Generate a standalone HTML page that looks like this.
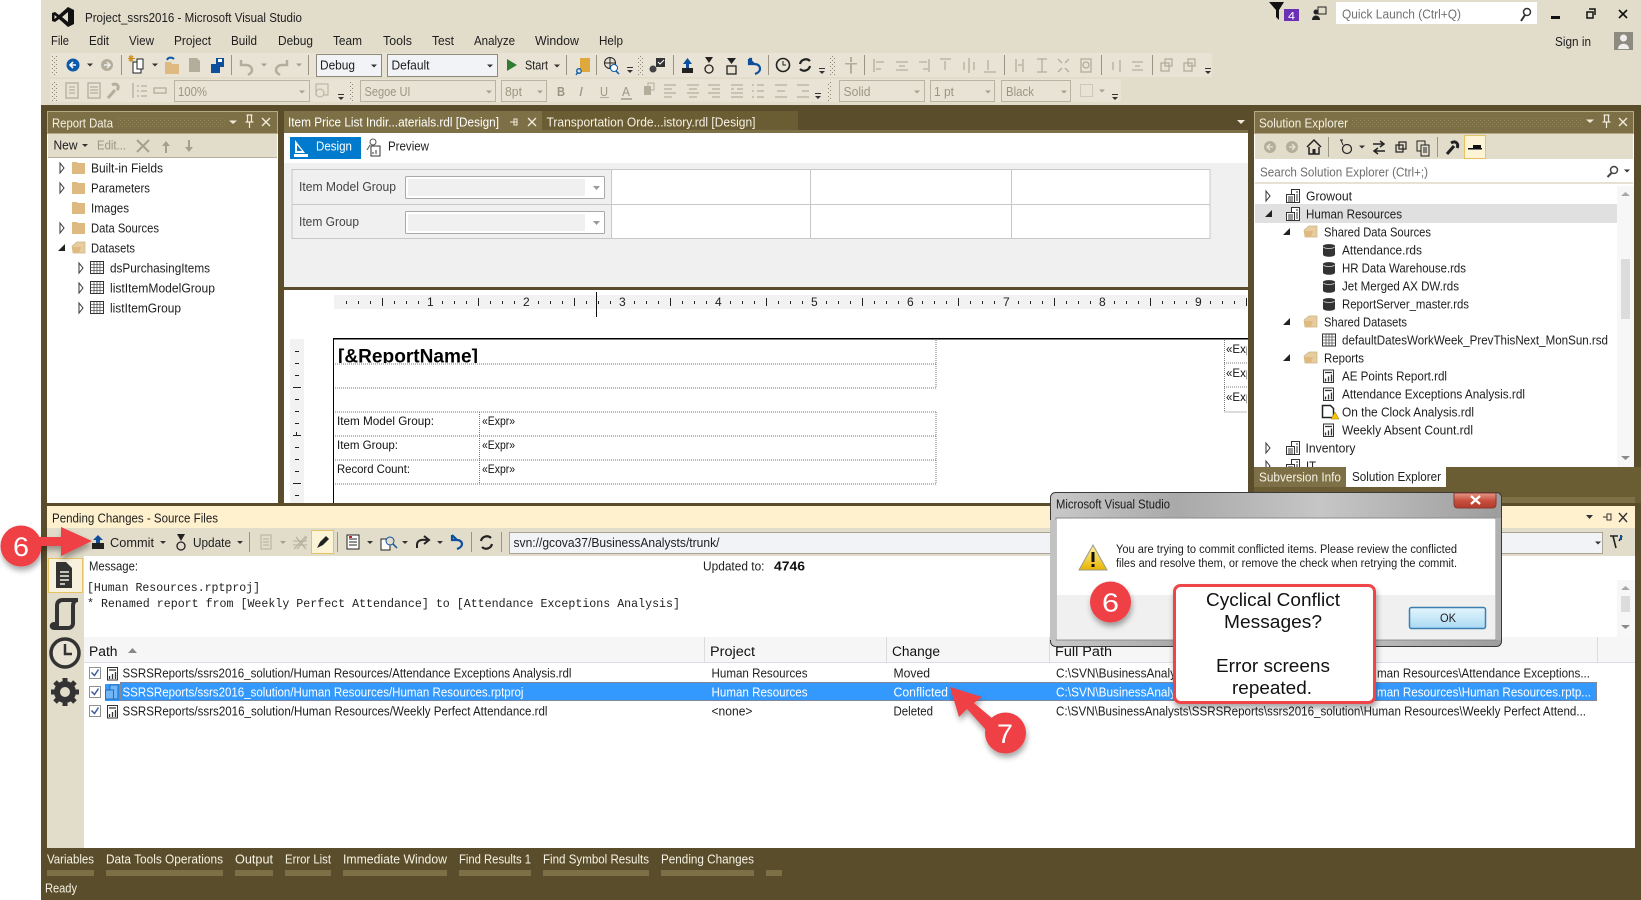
<!DOCTYPE html>
<html><head><meta charset="utf-8"><title>Project_ssrs2016 - Microsoft Visual Studio</title>
<style>
html,body{margin:0;padding:0;background:#fff;overflow:hidden}
svg{display:block}
text{font-family:"Liberation Sans",sans-serif;font-size:12.5px;fill:#1e1e1e}
.w{fill:#f6f2e4}.g{fill:#9b9684}.b{fill:#fff}.m{font-family:"Liberation Mono",monospace;font-size:12px}
.d{stroke:#777;stroke-width:1;stroke-dasharray:1 1;fill:none}
.ic{fill:#b3ae9c}.sep{fill:#9a9482}
</style></head><body>
<svg xmlns="http://www.w3.org/2000/svg" width="1641" height="900" viewBox="0 0 1641 900">
<defs>
<linearGradient id="aero" x1="0" x2="1" y1="0" y2="0"><stop offset="0" stop-color="#c9c9c9"/><stop offset=".28" stop-color="#a9a9a9"/><stop offset=".6" stop-color="#c6c6c6"/><stop offset="1" stop-color="#9d9d9d"/></linearGradient>
<linearGradient id="ok" x1="0" x2="0" y1="0" y2="1"><stop offset="0" stop-color="#e3f4fc"/><stop offset=".5" stop-color="#c8e8f8"/><stop offset="1" stop-color="#a9d9f3"/></linearGradient>
<linearGradient id="red" x1="0" x2="0" y1="0" y2="1"><stop offset="0" stop-color="#e69a8a"/><stop offset=".5" stop-color="#c9503d"/><stop offset="1" stop-color="#b23a2c"/></linearGradient>
<linearGradient id="warn" x1="0" x2="0" y1="0" y2="1"><stop offset="0" stop-color="#fff2a0"/><stop offset="1" stop-color="#e8b400"/></linearGradient>
<filter id="sh" x="-40%" y="-40%" width="190%" height="190%"><feDropShadow dx="1" dy="4" stdDeviation="3" flood-color="#000" flood-opacity=".35"/></filter>
<pattern id="dots" width="4" height="4" patternUnits="userSpaceOnUse"><rect width="1" height="1" fill="#8f8258"/><rect x="2" y="2" width="1" height="1" fill="#8f8258"/></pattern>
<pattern id="grip" width="4" height="4" patternUnits="userSpaceOnUse"><rect width="1" height="1" fill="#8d8875"/><rect x="2" y="2" width="1" height="1" fill="#8d8875"/></pattern>
<pattern id="hr" x="334" y="295" width="96" height="14" patternUnits="userSpaceOnUse"><g fill="#222"><rect x="12" y="6" width="1" height="3"/><rect x="24" y="6" width="1" height="3"/><rect x="36" y="6" width="1" height="3"/><rect x="48" y="3" width="1" height="8"/><rect x="60" y="6" width="1" height="3"/><rect x="72" y="6" width="1" height="3"/><rect x="84" y="6" width="1" height="3"/></g></pattern>
<g id="folder"><path d="M0 1h5l1 1h7v11H0z" fill="#deba80"/></g>
<g id="ofolder"><path d="M0 5l5-4h8v11H1z" fill="#e6cd9f" stroke="#cdb27e" stroke-width=".7"/><path d="M0 6h9l-2 6H1z" fill="#deba80"/></g>
<path id="ex" d="M-2-5L2 0L-2 5Z" fill="#fff" stroke="#333"/>
<path id="exd" d="M-4 3H3V-4Z" fill="#222"/>
<g id="tbl"><rect x=".5" y=".5" width="13" height="12" fill="#fff" stroke="#333"/><path d="M1 3.5h12M1 6.500h12M1 9.500h12M4 1v11M7 1v11M10 1v11" stroke="#555" stroke-width=".8"/></g>
<g id="proj"><rect x="5.500" y=".5" width="8" height="13" fill="#fff" stroke="#333"/><rect x=".5" y="5.500" width="8" height="8" fill="#fff" stroke="#333"/><path d="M2 8h5M2 10h5M2 12h5M10 3h2M11 5v7" stroke="#333"/></g>
<g id="db"><path d="M0 2.500C0 0 12 0 12 2.500V11C12 14 0 14 0 11Z" fill="#333"/><path d="M.5 3.500C2 5.500 10 5.500 11.500 3.500" fill="none" stroke="#ddd" stroke-width=".8"/></g>
<g id="rep"><rect x=".5" y=".5" width="10" height="12.500" fill="#fff" stroke="#333"/><path d="M2 3h7M2.500 12V9M5.500 12V7M8.500 12V5" stroke="#333" stroke-width="1.300"/></g>
<path id="dd" d="M-3-1.500H3L0 1.500Z" fill="#333"/>
<path id="ddg" d="M-3-1.500H3L0 1.500Z" fill="#a5a08e"/>
<g id="ovf"><rect x="-3" y="-3" width="6" height="1" fill="#333"/><path d="M-3 0H3L0 3Z" fill="#333"/></g>
<g id="ptb"><path d="M-4-1.500H4L0 2Z" fill="#f0ebdb"/></g>
<g id="pin"><path d="M-3-6h6M-2-6v7h4v-7M-4 1h8M0 1v6" fill="none" stroke="#f0ebdb" stroke-width="1.200"/></g>
<g id="xx"><path d="M-4-4L4 4M4-4L-4 4" stroke="#f0ebdb" stroke-width="1.400"/></g>
</defs>

<!-- base -->
<rect x="41" width="1600" height="900" fill="#5a4d2b"/>
<rect x="41" width="1600" height="105" fill="#e2dccb"/>

<!-- title -->
<path fill-rule="evenodd" d="M68 7L74 10V24L68 27L59 19L55 22L52 21V13L55 12L59 15ZM68 12L62 17L68 22ZM54.500 15V19L57 17Z" fill="#111"/>
<text x="85" y="22" textLength="217" lengthAdjust="spacingAndGlyphs">Project_ssrs2016 - Microsoft Visual Studio</text>
<path d="M1269 2H1284L1279 10V20L1276 17V10Z" fill="#111"/>
<rect x="1284" y="9" width="15" height="12" fill="#6b2fb5"/><text class="b" x="1288" y="19.500" style="font-size:11px" textLength="7" lengthAdjust="spacingAndGlyphs">4</text>
<rect x="1318" y="7" width="8" height="7" fill="none" stroke="#222"/><circle cx="1316" cy="12" r="2.500" fill="#222"/><path d="M1312 20c0-6 8-6 8 0z" fill="#222"/>
<rect x="1336" y="2" width="201" height="22" fill="#fff"/>
<text x="1342" y="18.500" textLength="119" lengthAdjust="spacingAndGlyphs" style="fill:#717171">Quick Launch (Ctrl+Q)</text>
<circle cx="1527" cy="12" r="3.500" fill="none" stroke="#333" stroke-width="1.500"/><path d="M1525 15L1521 21" stroke="#333" stroke-width="2"/>
<rect x="1551" y="16" width="9" height="3" fill="#111"/>
<path d="M1587 12h6v6h-6zM1589 9h6v6" fill="none" stroke="#111" stroke-width="1.500"/>
<path d="M1619 10l8 8M1627 10l-8 8" stroke="#111" stroke-width="1.600"/>
<text x="1555" y="46" textLength="36" lengthAdjust="spacingAndGlyphs">Sign in</text>
<rect x="1614" y="32" width="19" height="18" fill="#8d8a80"/><circle cx="1623.500" cy="38" r="3.500" fill="#eee"/><path d="M1618 49c0-7 11-7 11 0z" fill="#eee"/>

<!-- menu -->
<g>
<text x="51" y="45" textLength="18" lengthAdjust="spacingAndGlyphs">File</text>
<text x="89" y="45" textLength="20" lengthAdjust="spacingAndGlyphs">Edit</text>
<text x="129" y="45" textLength="25" lengthAdjust="spacingAndGlyphs">View</text>
<text x="174" y="45" textLength="37" lengthAdjust="spacingAndGlyphs">Project</text>
<text x="231" y="45" textLength="26" lengthAdjust="spacingAndGlyphs">Build</text>
<text x="278" y="45" textLength="35" lengthAdjust="spacingAndGlyphs">Debug</text>
<text x="333" y="45" textLength="29" lengthAdjust="spacingAndGlyphs">Team</text>
<text x="383" y="45" textLength="29" lengthAdjust="spacingAndGlyphs">Tools</text>
<text x="432" y="45" textLength="22" lengthAdjust="spacingAndGlyphs">Test</text>
<text x="474" y="45" textLength="41" lengthAdjust="spacingAndGlyphs">Analyze</text>
<text x="535" y="45" textLength="44" lengthAdjust="spacingAndGlyphs">Window</text>
<text x="599" y="45" textLength="24" lengthAdjust="spacingAndGlyphs">Help</text>
</g>

<!-- toolbars -->
<rect x="50" y="53" width="1162" height="24" fill="#e8e3d4"/>
<rect x="50" y="79" width="1071" height="23" fill="#e8e3d4"/>
<rect x="52" y="55" width="5" height="20" fill="url(#grip)"/><rect x="52" y="81" width="5" height="20" fill="url(#grip)"/>
<circle cx="73" cy="65" r="6.500" fill="#0d5aa7"/><path d="M76 65h-5M73 62l-3 3l3 3" stroke="#fff" stroke-width="1.600" fill="none"/>
<use href="#dd" x="90" y="65"/>
<circle cx="107" cy="65" r="6" fill="#b3ae9c"/><path d="M104 65h5M107 62l3 3l-3 3" stroke="#eee" stroke-width="1.500" fill="none"/>
<rect x="121" y="55" width="1" height="20" class="sep"/>
<rect x="133" y="62" width="8" height="11" fill="#fff" stroke="#222"/><rect x="137" y="59" width="6" height="10" fill="#fff" stroke="#222"/><path d="M131 55v7M128 58.500h7M129 56l4 5M133 56l-4 5" stroke="#c98a1a" stroke-width="1.100"/>
<use href="#dd" x="155" y="65"/>
<path d="M165 62h6l1 2h7v10h-14z" fill="#deba80"/><path d="M167 60c1-3 5-3 7-1" stroke="#0d5aa7" stroke-width="2" fill="none"/>
<path d="M189 58h8l3 3v11h-11z" class="ic"/>
<path d="M211 64h9v9h-9z" fill="#0d4f9c"/><path d="M216 58h8v9h-8z" fill="#0d4f9c"/><rect x="218" y="59" width="4" height="3" fill="#fff"/>
<rect x="231" y="55" width="1" height="20" class="sep"/>
<path d="M241 60v5h5c3 0 6 2 6 5 0 2-1 3-4 5" fill="none" stroke="#b3ae9c" stroke-width="2.400"/>
<use href="#ddg" x="264" y="65"/>
<path d="M287 60v5h-5c-3 0-6 2-6 5 0 2 1 3 4 5" fill="none" stroke="#b3ae9c" stroke-width="2.400"/>
<use href="#ddg" x="299" y="65"/>
<rect x="308" y="55" width="1" height="20" class="sep"/>
<rect x="316.500" y="54.500" width="65" height="22" fill="#f2f3f6" stroke="#8f8a78"/>
<text x="320" y="69.500" textLength="35" lengthAdjust="spacingAndGlyphs">Debug</text><use href="#dd" x="374" y="66"/>
<rect x="387.500" y="54.500" width="110" height="22" fill="#f2f3f6" stroke="#8f8a78"/>
<text x="391.500" y="69.500" textLength="38" lengthAdjust="spacingAndGlyphs">Default</text><use href="#dd" x="490" y="66"/>
<path d="M507 59L517 65L507 71Z" fill="#2f7d32"/>
<text x="525" y="69.500" textLength="23" lengthAdjust="spacingAndGlyphs">Start</text><use href="#dd" x="557" y="66"/>
<rect x="566" y="55" width="1" height="20" class="sep"/>
<path d="M580 58h10v14h-8v-3h-2z" fill="#dfa83c"/><circle cx="579" cy="71" r="2.300" fill="none" stroke="#0d5aa7" stroke-width="1.300"/><path d="M576 75l2-3" stroke="#0d5aa7" stroke-width="1.300"/>
<rect x="596" y="55" width="1" height="20" class="sep"/>
<circle cx="610" cy="63" r="5.500" fill="none" stroke="#222"/><path d="M604.500 63h11M610 57.500v11" stroke="#222"/><circle cx="614" cy="68" r="3.500" fill="#fff" stroke="#0d5aa7"/><path d="M616 71l3 3" stroke="#0d5aa7" stroke-width="1.500"/>
<use href="#ovf" x="630" y="70"/>
<rect x="638" y="55" width="5" height="20" fill="url(#grip)"/>
<circle cx="653" cy="69" r="3.500" fill="#444"/><circle cx="659" cy="64" r="2.500" fill="#444"/><rect x="656" y="58" width="9" height="9" fill="#333"/><path d="M658 62l2 2 4-4" stroke="#fff" fill="none"/>
<rect x="673" y="55" width="1" height="20" class="sep"/>
<rect x="682" y="68" width="11" height="5" fill="#222"/><path d="M687.500 58L692 64H683Z" fill="#0d4f9c"/><rect x="686" y="63" width="3" height="5" fill="#0d4f9c"/>
<circle cx="709" cy="69" r="4" fill="none" stroke="#222" stroke-width="1.300"/><path d="M705 57h8l-4 6z" fill="#222"/>
<rect x="727" y="66" width="9" height="8" fill="none" stroke="#222" stroke-width="1.300"/><path d="M731.500 64L736 58H727Z" fill="#222"/>
<path d="M749 59h2v5h3c4 0 6 2 6 5 0 2-2 4-5 5M749 59l5 5M749 59v5h5" fill="none" stroke="#0d4f9c" stroke-width="2.200"/>
<rect x="768" y="55" width="1" height="20" class="sep"/>
<circle cx="783" cy="65" r="6.500" fill="none" stroke="#222" stroke-width="1.600"/><path d="M783 61v4h3" stroke="#222" fill="none"/>
<path d="M800 64a6 6 0 0 1 10-3M810 66a6 6 0 0 1-10 3" fill="none" stroke="#222" stroke-width="2.200"/>
<use href="#ovf" x="822" y="71"/>
<rect x="830" y="55" width="5" height="20" fill="url(#grip)"/>
<g class="ic"><path d="M845 63h12v1.500h-5v9h-2v-9h-5zM850 57h2v5h-2z"/><rect x="864" y="55" width="1" height="20" fill="#9a9482"/>
<g fill="none" stroke="#b3ae9c" stroke-width="1.300"><path d="M874 59v13M876 62h8M876 69h5M896 62h12M899 66h6M896 70h12M929 59v13M919 62h8M923 69h5M940 59h11M945 61v9M964 62v8M969 58v15M974 62v8M984 72h12M988 60v10M1016 59v13M1023 59v13M1018 65h4M1037 59h10M1037 72h10M1042 59v13M1058 59l4 4M1069 59l-4 4M1058 72l4-4M1069 72l-4-4M1113 62v8M1120 60v12M1132 62h11M1135 66h5M1132 70h11"/><rect x="1081" y="59" width="10" height="13"/><circle cx="1086" cy="65" r="3"/><rect x="1161" y="63" width="8" height="8"/><rect x="1165" y="59" width="7" height="7"/><rect x="1184" y="63" width="8" height="8"/><rect x="1188" y="59" width="7" height="7"/></g></g>
<rect x="1004" y="55" width="1" height="20" class="sep"/><rect x="1101" y="55" width="1" height="20" class="sep"/><rect x="1152" y="55" width="1" height="20" class="sep"/>
<use href="#ovf" x="1208" y="71"/>

<!-- row 2 -->
<g fill="none" stroke="#b3ae9c" stroke-width="1.300"><rect x="66" y="83" width="12" height="15"/><path d="M69 87h6M69 90h6M69 93h6"/><rect x="88" y="83" width="12" height="15"/><path d="M90 87h8M90 90h8M90 93h8"/><path d="M108 98l7-8M112 85c5-3 8 2 5 5" stroke-width="3"/><path d="M133 83v15M141 86h6M141 91h6M141 96h6M137 86h2M137 91h2M137 96h2"/><rect x="154" y="88" width="12" height="5"/></g>
<rect x="174.500" y="80.500" width="135" height="21" fill="#e8e3d4" stroke="#b9b4a2"/>
<text class="g" x="178" y="96" textLength="29" lengthAdjust="spacingAndGlyphs">100%</text><use href="#ddg" x="302" y="92"/>
<rect x="316" y="84" width="12" height="11" fill="none" stroke="#b3ae9c"/><circle cx="320" cy="93" r="4" fill="#e8e3d4" stroke="#b3ae9c"/>
<use href="#ovf" x="341" y="97"/>
<rect x="349" y="81" width="5" height="20" fill="url(#grip)"/>
<rect x="360.500" y="80.500" width="135" height="21" fill="#e8e3d4" stroke="#b9b4a2"/>
<text class="g" x="364.500" y="96" textLength="46" lengthAdjust="spacingAndGlyphs">Segoe UI</text><use href="#ddg" x="489" y="92"/>
<rect x="501.500" y="80.500" width="45" height="21" fill="#e8e3d4" stroke="#b9b4a2"/>
<text class="g" x="505" y="96" textLength="17" lengthAdjust="spacingAndGlyphs">8pt</text><use href="#ddg" x="540" y="92"/>
<text class="g" x="557" y="96" style="font-weight:bold" textLength="8" lengthAdjust="spacingAndGlyphs">B</text>
<text class="g" x="579" y="96" style="font-style:italic" textLength="4" lengthAdjust="spacingAndGlyphs">I</text>
<text class="g" x="600" y="96" textLength="8" lengthAdjust="spacingAndGlyphs">U</text><rect x="600" y="97" width="9" height="1" fill="#b3ae9c"/>
<text class="g" x="622" y="96" textLength="8" lengthAdjust="spacingAndGlyphs">A</text><rect x="621" y="98" width="11" height="2" fill="#b3ae9c"/>
<rect x="644" y="86" width="7" height="9" class="ic"/><rect x="648" y="83" width="6" height="7" fill="none" stroke="#b3ae9c"/>
<g fill="none" stroke="#b3ae9c" stroke-width="1.300"><path d="M664 85h12M664 89h8M664 93h12M664 97h8M687 85h12M689 89h8M687 93h12M689 97h8M708 85h12M712 89h8M708 93h12M712 97h8M731 85h12M731 89h3M737 89h6M731 93h12M731 97h12M752 85h2M757 85h7M752 91h2M757 91h7M752 97h2M757 97h7M775 85h12M777 91h8M775 97h12M797 85h12M802 91h7M797 97h12"/></g>
<use href="#ovf" x="818" y="96"/>
<rect x="827" y="81" width="5" height="20" fill="url(#grip)"/>
<rect x="839.500" y="80.500" width="85" height="21" fill="#e8e3d4" stroke="#b9b4a2"/><text class="g" x="843.500" y="96" textLength="27" lengthAdjust="spacingAndGlyphs">Solid</text><use href="#ddg" x="917" y="92"/>
<rect x="930.500" y="80.500" width="64" height="21" fill="#e8e3d4" stroke="#b9b4a2"/><text class="g" x="934" y="96" textLength="20" lengthAdjust="spacingAndGlyphs">1 pt</text><use href="#ddg" x="988" y="92"/>
<rect x="1001.500" y="80.500" width="69" height="21" fill="#e8e3d4" stroke="#b9b4a2"/><text class="g" x="1006" y="96" textLength="28" lengthAdjust="spacingAndGlyphs">Black</text><use href="#ddg" x="1064" y="92"/>
<rect x="1080.500" y="84.500" width="12" height="12" fill="none" stroke="#b3ae9c" stroke-dasharray="1 1"/><use href="#ddg" x="1102" y="91"/>
<use href="#ovf" x="1115" y="97"/>

<!-- Report Data panel -->
<rect x="47" y="111" width="231" height="392" fill="#fff"/>
<rect x="47.500" y="111.500" width="230" height="22" fill="#7e7046" stroke="#b5aa85"/>
<rect x="117" y="118" width="108" height="9" fill="url(#dots)"/>
<text class="w" x="52" y="127.500" textLength="61" lengthAdjust="spacingAndGlyphs">Report Data</text>
<use href="#ptb" x="233" y="122"/><use href="#pin" x="249.500" y="121"/><use href="#xx" x="266" y="122"/>
<rect x="48" y="134" width="229" height="24" fill="#e2dccb"/><rect x="48" y="157" width="229" height="1" fill="#b5af9b"/>
<text x="53.500" y="149.500" textLength="24" lengthAdjust="spacingAndGlyphs">New</text><use href="#dd" x="85" y="145.500"/>
<text class="g" x="97" y="149.500" textLength="29" lengthAdjust="spacingAndGlyphs">Edit...</text>
<path d="M137 140l12 12M149 140l-12 12" stroke="#a5a08e" stroke-width="2"/>
<path d="M166 141l-4 5h3v7h2v-7h3zM189 152l-4-5h3v-7h2v7h3z" fill="#a5a08e"/>
<g>
<use href="#ex" x="62" y="168"/><use href="#folder" x="72" y="161"/><text x="91" y="172.500" textLength="72" lengthAdjust="spacingAndGlyphs">Built-in Fields</text>
<use href="#ex" x="62" y="188"/><use href="#folder" x="72" y="181"/><text x="91" y="192.500" textLength="59" lengthAdjust="spacingAndGlyphs">Parameters</text>
<use href="#folder" x="72" y="201"/><text x="91" y="212.500" textLength="38" lengthAdjust="spacingAndGlyphs">Images</text>
<use href="#ex" x="62" y="228"/><use href="#folder" x="72" y="221"/><text x="91" y="232.500" textLength="68" lengthAdjust="spacingAndGlyphs">Data Sources</text>
<use href="#exd" x="62" y="248"/><use href="#ofolder" x="72" y="241"/><text x="91" y="252.500" textLength="44" lengthAdjust="spacingAndGlyphs">Datasets</text>
<use href="#ex" x="81" y="268"/><use href="#tbl" x="90" y="261"/><text x="110" y="272.500" textLength="100" lengthAdjust="spacingAndGlyphs">dsPurchasingItems</text>
<use href="#ex" x="81" y="288"/><use href="#tbl" x="90" y="281"/><text x="110" y="292.500" textLength="105" lengthAdjust="spacingAndGlyphs">listItemModelGroup</text>
<use href="#ex" x="81" y="308"/><use href="#tbl" x="90" y="301"/><text x="110" y="312.500" textLength="71" lengthAdjust="spacingAndGlyphs">listItemGroup</text>
</g>

<!-- Tabs -->
<rect x="284" y="111" width="258" height="22" fill="#7e7046"/>
<rect x="542" y="111" width="256" height="19" fill="#6a5c33"/>
<rect x="284" y="130" width="964" height="3" fill="#7e7046"/>
<text class="b" x="288" y="126.500" textLength="211" lengthAdjust="spacingAndGlyphs">Item Price List Indir...aterials.rdl [Design]</text>
<path d="M510 122h7M514 119v6h3v-6zM514 122h-4" stroke="#f0ebdb" fill="none"/><use href="#xx" x="532" y="122"/>
<text class="w" x="546.500" y="126.500" textLength="209" lengthAdjust="spacingAndGlyphs">Transportation Orde...istory.rdl [Design]</text>
<path d="M1237 120H1245L1241 124Z" fill="#f0ebdb"/>

<!-- Design area -->
<rect x="284" y="133" width="964" height="370" fill="#fff"/>
<rect x="290" y="137" width="71" height="22" fill="#007acc"/>
<path d="M295 140v13l10 0zM297 145v6h5z" fill="#fff" fill-rule="evenodd"/><rect x="294" y="154" width="14" height="3" fill="#fff"/>
<text class="b" x="316" y="150.500" textLength="36" lengthAdjust="spacingAndGlyphs">Design</text>
<rect x="371" y="146" width="9" height="10" fill="#fff" stroke="#333"/><circle cx="373" cy="142" r="3" fill="none" stroke="#555"/><path d="M367 150l3-5" stroke="#555"/><path d="M373 154v-2M376 154v-4" stroke="#333"/>
<text x="388" y="150.500" textLength="41" lengthAdjust="spacingAndGlyphs">Preview</text>
<rect x="284" y="163" width="964" height="124" fill="#f0f0f0"/>
<rect x="292" y="169.500" width="918" height="69" fill="#fff"/>
<rect x="292" y="169.500" width="319" height="69" fill="#f0f0f0"/>
<path d="M292 169.500H1210V238.500H292ZM292 204.500H1210M611.500 170V238M810.500 170V238M1011.500 170V238" fill="none" stroke="#c8c8c8"/>
<text x="299" y="191" style="fill:#444" textLength="97" lengthAdjust="spacingAndGlyphs">Item Model Group</text>
<text x="299" y="226" style="fill:#444" textLength="60" lengthAdjust="spacingAndGlyphs">Item Group</text>
<rect x="405.500" y="176.500" width="199" height="22" rx="1" fill="#fff" stroke="#aaa"/><rect x="408" y="179" width="177" height="17" fill="#f0f0f0"/><path d="M593 186h7l-3.500 4z" fill="#999"/>
<rect x="405.500" y="211.500" width="199" height="22" rx="1" fill="#fff" stroke="#aaa"/><rect x="408" y="214" width="177" height="17" fill="#f0f0f0"/><path d="M593 221h7l-3.500 4z" fill="#999"/>
<rect x="284" y="287" width="964" height="3" fill="#5a4d2b"/>
<!-- ruler -->
<rect x="334" y="295" width="913" height="14" fill="#f2f2f2"/>
<rect x="334" y="295" width="913" height="14" fill="url(#hr)"/>
<g>
<text x="427" y="306" style="font-size:12px">1</text><text x="523" y="306" style="font-size:12px">2</text><text x="619" y="306" style="font-size:12px">3</text><text x="715" y="306" style="font-size:12px">4</text><text x="811" y="306" style="font-size:12px">5</text><text x="907" y="306" style="font-size:12px">6</text><text x="1003" y="306" style="font-size:12px">7</text><text x="1099" y="306" style="font-size:12px">8</text><text x="1195" y="306" style="font-size:12px">9</text>
</g>
<rect x="596" y="292" width="1" height="25" fill="#111"/>
<!-- v ruler -->
<rect x="290" y="339" width="14" height="164" fill="#f2f2f2"/>
<g fill="#222"><rect x="295" y="351" width="4" height="1"/><rect x="295" y="363" width="4" height="1"/><rect x="295" y="375" width="4" height="1"/><rect x="293" y="387" width="8" height="1"/><rect x="295" y="399" width="4" height="1"/><rect x="295" y="411" width="4" height="1"/><rect x="295" y="423" width="4" height="1"/><rect x="293" y="435" width="8" height="1"/><rect x="296" y="432" width="1" height="3"/><rect x="295" y="447" width="4" height="1"/><rect x="295" y="459" width="4" height="1"/><rect x="295" y="471" width="4" height="1"/><rect x="293" y="483" width="8" height="1"/><rect x="295" y="495" width="4" height="1"/></g>
<!-- report -->
<rect x="333" y="338" width="915" height="1.500" fill="#000"/><rect x="333" y="338" width="1" height="165" fill="#000"/>
<svg x="335" y="340" width="145" height="23"><text x="3" y="22.500" style="font-weight:bold;font-size:19px;fill:#000" textLength="140" lengthAdjust="spacingAndGlyphs">[&amp;ReportName]</text></svg>
<path class="d" d="M335 364H936M335 388H936M936 340V388M335 412H936M335 436H936M335 460H936M335 484H936M936 412V484M479.500 412V484"/>
<g>
<text x="337" y="425" style="font-size:12px;fill:#111" textLength="97" lengthAdjust="spacingAndGlyphs">Item Model Group:</text>
<text x="337" y="449" style="font-size:12px;fill:#111" textLength="61" lengthAdjust="spacingAndGlyphs">Item Group:</text>
<text x="337" y="473" style="font-size:12px;fill:#111" textLength="73" lengthAdjust="spacingAndGlyphs">Record Count:</text>
<text x="482" y="425" style="font-size:11.500px;fill:#111" textLength="33" lengthAdjust="spacingAndGlyphs">«Expr»</text>
<text x="482" y="449" style="font-size:11.500px;fill:#111" textLength="33" lengthAdjust="spacingAndGlyphs">«Expr»</text>
<text x="482" y="473" style="font-size:11.500px;fill:#111" textLength="33" lengthAdjust="spacingAndGlyphs">«Expr»</text>
</g>
<path class="d" d="M1224.500 340V412H1247M1224 363H1247M1224 387H1247"/>
<svg x="1224" y="340" width="23" height="72"><text x="2" y="13" style="font-size:11.500px;fill:#111">«Expr»</text><text x="2" y="37" style="font-size:11.500px;fill:#111">«Expr»</text><text x="2" y="61" style="font-size:11.500px;fill:#111">«Expr»</text></svg>

<!-- Solution Explorer -->
<rect x="1254" y="467" width="387" height="36" fill="#6a5c33"/>
<rect x="1254" y="111" width="380" height="356" fill="#fff"/>
<rect x="1254.500" y="111.500" width="379" height="22" fill="#7e7046" stroke="#b5aa85"/>
<rect x="1352" y="118" width="232" height="9" fill="url(#dots)"/>
<text class="w" x="1259" y="127.500" textLength="89" lengthAdjust="spacingAndGlyphs">Solution Explorer</text>
<use href="#ptb" x="1590" y="121"/><use href="#pin" x="1606.500" y="121"/><use href="#xx" x="1623" y="122"/>
<rect x="1255" y="134" width="378" height="25" fill="#e2dccb"/>
<circle cx="1270" cy="147" r="6" class="ic"/><path d="M1273 147h-5M1270 144l-3 3l3 3" stroke="#e8e3d4" stroke-width="1.300" fill="none"/>
<circle cx="1292" cy="147" r="6" class="ic"/><path d="M1289 147h5M1292 144l3 3l-3 3" stroke="#e8e3d4" stroke-width="1.300" fill="none"/>
<path d="M1307 147l7-7 7 7M1309 147v7h10v-7" fill="none" stroke="#222" stroke-width="1.500"/><rect x="1312.500" y="149" width="3" height="5" fill="#222"/>
<rect x="1328" y="137" width="1" height="20" class="sep"/>
<circle cx="1347" cy="149" r="4.500" fill="none" stroke="#222" stroke-width="1.200"/><path d="M1340 140l3 0M1341 140l2 5" stroke="#222"/>
<use href="#dd" x="1362" y="147"/>
<path d="M1373 144h11M1380 141l4 3-4 3M1385 151h-11M1378 148l-4 3 4 3" fill="none" stroke="#222" stroke-width="1.500"/>
<rect x="1396" y="145" width="7" height="7" fill="none" stroke="#222" stroke-width="1.200"/><rect x="1399" y="142" width="7" height="7" fill="none" stroke="#222" stroke-width="1.200"/>
<rect x="1417" y="141" width="8" height="10" fill="none" stroke="#222"/><rect x="1421" y="145" width="8" height="11" fill="#e2dccb" stroke="#222"/><path d="M1423 148h4M1423 150h4M1423 152h4" stroke="#222"/>
<rect x="1437" y="137" width="1" height="20" class="sep"/>
<path d="M1447 154l7-8M1451 143c5-3 8 1 6 5" stroke="#222" stroke-width="3" fill="none"/>
<rect x="1464.500" y="135.500" width="21" height="23" fill="#fdf4d6" stroke="#e5c365"/><rect x="1468" y="148" width="14" height="1.500" fill="#111"/><rect x="1473" y="145" width="8" height="3" fill="#111"/>
<text x="1260" y="176.500" style="fill:#6e6e6e" textLength="168" lengthAdjust="spacingAndGlyphs">Search Solution Explorer (Ctrl+;)</text>
<circle cx="1614" cy="170" r="3.500" fill="none" stroke="#444" stroke-width="1.500"/><path d="M1611.500 173l-4 4" stroke="#444" stroke-width="2"/><use href="#dd" x="1627" y="171"/>
<rect x="1255" y="182" width="378" height="2" fill="#e6e1d2"/>
<rect x="1255" y="204" width="362" height="19" fill="#e0e0e0"/>
<rect x="1617" y="186" width="17" height="281" fill="#f7f7f7"/>
<path d="M1621 196l4.500-4 4.500 4z" fill="#a8a8a8"/><rect x="1621" y="259" width="9" height="60" fill="#dcdcdc"/><path d="M1621 456l4.500 4 4.500-4z" fill="#8a8a8a"/>
<svg x="1255" y="184" width="362" height="283"><g transform="translate(-1255 -184)">
<use href="#ex" x="1268" y="196"/><use href="#proj" x="1286" y="189"/><text x="1306" y="200.500" textLength="46" lengthAdjust="spacingAndGlyphs">Growout</text>
<use href="#exd" x="1269" y="214"/><use href="#proj" x="1286" y="207"/><text x="1306" y="218.500" textLength="96" lengthAdjust="spacingAndGlyphs">Human Resources</text>
<use href="#exd" x="1287" y="232"/><use href="#ofolder" x="1304" y="225"/><text x="1324" y="236.500" textLength="107" lengthAdjust="spacingAndGlyphs">Shared Data Sources</text>
<use href="#db" x="1323" y="243.500"/><text x="1342" y="254.500" textLength="80" lengthAdjust="spacingAndGlyphs">Attendance.rds</text>
<use href="#db" x="1323" y="261.500"/><text x="1342" y="272.500" textLength="124" lengthAdjust="spacingAndGlyphs">HR Data Warehouse.rds</text>
<use href="#db" x="1323" y="279.500"/><text x="1342" y="290.500" textLength="117" lengthAdjust="spacingAndGlyphs">Jet Merged AX DW.rds</text>
<use href="#db" x="1323" y="297.500"/><text x="1342" y="308.500" textLength="127" lengthAdjust="spacingAndGlyphs">ReportServer_master.rds</text>
<use href="#exd" x="1287" y="322"/><use href="#ofolder" x="1304" y="315"/><text x="1324" y="326.500" textLength="83" lengthAdjust="spacingAndGlyphs">Shared Datasets</text>
<use href="#tbl" x="1322" y="333.500"/><text x="1342" y="344.500" textLength="266" lengthAdjust="spacingAndGlyphs">defaultDatesWorkWeek_PrevThisNext_MonSun.rsd</text>
<use href="#exd" x="1287" y="358"/><use href="#ofolder" x="1304" y="351"/><text x="1324" y="362.500" textLength="40" lengthAdjust="spacingAndGlyphs">Reports</text>
<use href="#rep" x="1323" y="369.500"/><text x="1342" y="380.500" textLength="105" lengthAdjust="spacingAndGlyphs">AE Points Report.rdl</text>
<use href="#rep" x="1323" y="387.500"/><text x="1342" y="398.500" textLength="183" lengthAdjust="spacingAndGlyphs">Attendance Exceptions Analysis.rdl</text>
<path d="M1322.500 405.500h8l3 3v9h-11z" fill="#fff" stroke="#222" stroke-width="1.500"/><path d="M1331 419l4-7 4 7z" fill="#f6c400" stroke="#9a7a00" stroke-width=".5"/><text x="1342" y="416.500" textLength="132" lengthAdjust="spacingAndGlyphs">On the Clock Analysis.rdl</text>
<use href="#rep" x="1323" y="423.500"/><text x="1342" y="434.500" textLength="131" lengthAdjust="spacingAndGlyphs">Weekly Absent Count.rdl</text>
<use href="#ex" x="1268" y="448"/><use href="#proj" x="1286" y="441"/><text x="1305.500" y="452.500" textLength="50" lengthAdjust="spacingAndGlyphs">Inventory</text>
<use href="#ex" x="1268" y="466"/><use href="#proj" x="1286" y="459"/><text x="1306" y="470.500" textLength="10" lengthAdjust="spacingAndGlyphs">IT</text>
</g></svg>
<rect x="1254" y="467" width="92" height="20" fill="#7e7046"/>
<text class="w" x="1259" y="481.500" textLength="82" lengthAdjust="spacingAndGlyphs">Subversion Info</text>
<rect x="1346" y="467" width="100" height="20" fill="#fff"/>
<text x="1352" y="481" textLength="89" lengthAdjust="spacingAndGlyphs">Solution Explorer</text>
<rect x="1254" y="497" width="381" height="6" fill="#7e7046"/>

<!-- Pending Changes -->
<rect x="47" y="506" width="1588" height="342" fill="#fff"/>
<rect x="47" y="506" width="1588" height="22" fill="#fff0ce"/>
<text x="52" y="522.500" textLength="166" lengthAdjust="spacingAndGlyphs">Pending Changes - Source Files</text>
<path d="M1586 515h7l-3.500 4z" fill="#333"/><path d="M1603 517h4M1607 514v6h4v-6z" stroke="#333" fill="none"/><path d="M1619 513l8 9M1627 513l-8 9" stroke="#333" stroke-width="1.400"/>
<rect x="47" y="528" width="1588" height="28" fill="#e2dccb"/>
<rect x="47" y="556" width="37" height="292" fill="#e2dccb"/>
<!-- toolbar -->
<rect x="92" y="543" width="12" height="6" fill="#222"/><path d="M98 535l5 5h-3v3h-4v-3h-3z" fill="#0d4f9c"/>
<text x="110" y="547" textLength="44" lengthAdjust="spacingAndGlyphs">Commit</text><use href="#dd" x="163" y="542.500"/>
<circle cx="181" cy="546" r="4" fill="none" stroke="#222" stroke-width="1.300"/><path d="M177 534h8l-4 7z" fill="#222"/>
<text x="193" y="547" textLength="38" lengthAdjust="spacingAndGlyphs">Update</text><use href="#dd" x="240" y="542.500"/>
<rect x="249" y="532" width="1" height="20" class="sep"/>
<rect x="261" y="535" width="10" height="14" fill="none" stroke="#b3ae9c"/><path d="M263 539h6M263 542h6M263 545h6" stroke="#b3ae9c"/><use href="#ddg" x="283" y="542.500"/>
<path d="M294 549l12-13M297 549l10-12M296 537l10 12M293 541h14M293 545h14" stroke="#b3ae9c" fill="none"/>
<rect x="311.500" y="530.500" width="22" height="23" fill="#fdf4d6" stroke="#e5c365"/><path d="M317 548l3-6 6-6 3 3-6 6z" fill="#222"/>
<rect x="337" y="532" width="1" height="20" class="sep"/>
<rect x="347" y="535" width="12" height="14" fill="#fff" stroke="#222"/><path d="M349 539h8M349 542h8M349 545h8" stroke="#222"/><rect x="349" y="536" width="3" height="2" fill="#c22"/><use href="#dd" x="370" y="542.500"/>
<rect x="381" y="539" width="9" height="11" fill="#fff" stroke="#222"/><circle cx="390" cy="541" r="4" fill="#e2dccb" stroke="#0d4f9c"/><path d="M393 544l4 4" stroke="#0d4f9c" stroke-width="1.500"/><use href="#dd" x="405" y="542.500"/>
<path d="M417 548v-3c0-4 3-6 10-5M424 536l5 4-5 4" fill="none" stroke="#222" stroke-width="2"/><use href="#dd" x="440" y="542.500"/>
<path d="M452 535v5h5c3 0 5 2 5 4 0 2-2 4-5 5M452 535l5 5" fill="none" stroke="#0d4f9c" stroke-width="2.200"/>
<rect x="471" y="532" width="1" height="20" class="sep"/>
<path d="M481 541a6 6 0 0 1 10-3M492 544a6 6 0 0 1-10 3" fill="none" stroke="#222" stroke-width="2.200"/>
<rect x="501" y="532" width="1" height="20" class="sep"/>
<rect x="509.500" y="532.500" width="1093" height="21" fill="#f2f3f6" stroke="#a8a392"/>
<text x="513.500" y="547" textLength="206" lengthAdjust="spacingAndGlyphs">svn://gcova37/BusinessAnalysts/trunk/</text>
<use href="#dd" x="1598" y="543"/>
<path d="M1613 536l3 12M1610 536h8M1622 536l-3 5" stroke="#222" stroke-width="1.600" fill="none"/><path d="M1621 535v5" stroke="#0d4f9c" stroke-width="2"/>
<!-- side -->
<rect x="48.500" y="558.500" width="34" height="34" fill="#f7f1de" stroke="#e5c365"/>
<path d="M56 562h10l6 6v20H56z" fill="#333"/><path d="M60 572h9M60 576h9M60 580h9M60 584h5" stroke="#f7f1de" stroke-width="1.500"/>
<path d="M57 606c0-4 2-6 6-6h15c-3 0-5 2-5 6v17c0 3-2 5-5 5h-14c-3 0-3-4 0-4h3z" fill="none" stroke="#333" stroke-width="4"/>
<circle cx="65" cy="653" r="14" fill="#e8e3d4" stroke="#333" stroke-width="3.500"/><path d="M65 644v10h7" fill="none" stroke="#333" stroke-width="2.500"/>
<circle cx="65" cy="692" r="8" fill="none" stroke="#333" stroke-width="6"/><path d="M65 678v5M65 701v5M51 692h5M74 692h5M55 682l4 4M71 698l4 4M75 682l-4 4M59 698l-4 4" stroke="#333" stroke-width="5"/>
<!-- message -->
<text x="89" y="570.500" textLength="49" lengthAdjust="spacingAndGlyphs">Message:</text>
<text x="703" y="570.500" textLength="61.500" lengthAdjust="spacingAndGlyphs">Updated to:</text>
<text x="774" y="570.500" style="font-weight:bold;fill:#111" textLength="31" lengthAdjust="spacingAndGlyphs">4746</text>
<text class="m" x="87" y="591" textLength="173" lengthAdjust="spacingAndGlyphs">[Human Resources.rptproj]</text>
<text class="m" x="87" y="607" textLength="593" lengthAdjust="spacingAndGlyphs">* Renamed report from [Weekly Perfect Attendance] to [Attendance Exceptions Analysis]</text>
<rect x="1617" y="580" width="18" height="57" fill="#f7f7f7"/>
<path d="M1621 590l4.500-4 4.500 4z" fill="#a8a8a8"/><rect x="1621" y="596" width="9" height="16" fill="#dcdcdc"/><path d="M1621 625l4.500 4 4.500-4z" fill="#8a8a8a"/>
<!-- list -->
<rect x="84" y="637" width="1551" height="26" fill="#f6f6f6"/><rect x="84" y="662" width="1551" height="1" fill="#dcdce4"/>
<path d="M704.500 637V662M886.500 637V662M1049.500 637V662M1597.500 637V662" stroke="#dcdcdc"/>
<text x="89" y="656" style="font-size:13.500px;fill:#111" textLength="28.500" lengthAdjust="spacingAndGlyphs">Path</text>
<path d="M128 653l4.500-5 4.500 5z" fill="#888"/>
<text x="710" y="656" style="font-size:13.500px;fill:#111" textLength="45" lengthAdjust="spacingAndGlyphs">Project</text>
<text x="892" y="656" style="font-size:13.500px;fill:#111" textLength="48" lengthAdjust="spacingAndGlyphs">Change</text>
<text x="1055" y="656" style="font-size:13.500px;fill:#111" textLength="57" lengthAdjust="spacingAndGlyphs">Full Path</text>
<rect x="120" y="682" width="1477" height="19" fill="#3399ff"/>
<rect x="120.500" y="682.500" width="1476" height="18" fill="none" stroke="#c97a3a" stroke-dasharray="1 1"/>
<g fill="#fff" stroke="#8e8f8f"><rect x="89.500" y="667.500" width="11" height="11"/><rect x="89.500" y="686.500" width="11" height="11"/><rect x="89.500" y="705.500" width="11" height="11"/></g>
<path d="M91.500 672.500l3 3 4-6M91.500 691.500l3 3 4-6M91.500 710.500l3 3 4-6" fill="none" stroke="#3c5a9a" stroke-width="1.500"/>
<use href="#rep" x="107" y="667"/><use href="#rep" x="107" y="705"/>
<rect x="105" y="684" width="15" height="17" fill="#3399ff"/><g opacity=".7"><rect x="110" y="685" width="8" height="14" fill="#8cc4f5" stroke="#1d5e9e"/><rect x="105.500" y="690" width="8" height="9" fill="#8cc4f5" stroke="#1d5e9e"/></g>
<text x="122.500" y="677.500" textLength="449" lengthAdjust="spacingAndGlyphs">SSRSReports/ssrs2016_solution/Human Resources/Attendance Exceptions Analysis.rdl</text>
<text class="b" x="122.500" y="696.500" textLength="401" lengthAdjust="spacingAndGlyphs">SSRSReports/ssrs2016_solution/Human Resources/Human Resources.rptproj</text>
<text x="122.500" y="715.500" textLength="425" lengthAdjust="spacingAndGlyphs">SSRSReports/ssrs2016_solution/Human Resources/Weekly Perfect Attendance.rdl</text>
<text x="711.500" y="677.500" textLength="96" lengthAdjust="spacingAndGlyphs">Human Resources</text>
<text class="b" x="711.500" y="696.500" textLength="96" lengthAdjust="spacingAndGlyphs">Human Resources</text>
<text x="711.500" y="715.500" textLength="41" lengthAdjust="spacingAndGlyphs">&lt;none&gt;</text>
<text x="893.500" y="677.500" textLength="36.500" lengthAdjust="spacingAndGlyphs">Moved</text>
<text class="b" x="893.500" y="696.500" textLength="54.500" lengthAdjust="spacingAndGlyphs">Conflicted</text>
<text x="893.500" y="715.500" textLength="39.500" lengthAdjust="spacingAndGlyphs">Deleted</text>
<text x="1056" y="677.500" textLength="120" lengthAdjust="spacingAndGlyphs">C:\SVN\BusinessAnaly</text>
<text class="b" x="1056" y="696.500" textLength="120" lengthAdjust="spacingAndGlyphs">C:\SVN\BusinessAnaly</text>
<text x="1056" y="715.500" textLength="530" lengthAdjust="spacingAndGlyphs">C:\SVN\BusinessAnalysts\SSRSReports\ssrs2016_solution\Human Resources\Weekly Perfect Attend...</text>
<text x="1377" y="677.500" textLength="213" lengthAdjust="spacingAndGlyphs">man Resources\Attendance Exceptions...</text>
<text class="b" x="1377" y="696.500" textLength="214" lengthAdjust="spacingAndGlyphs">man Resources\Human Resources.rptp...</text>

<!-- bottom tabs -->
<text class="w" x="47" y="863.500" textLength="47" lengthAdjust="spacingAndGlyphs">Variables</text>
<text class="w" x="106" y="863.500" textLength="117" lengthAdjust="spacingAndGlyphs">Data Tools Operations</text>
<text class="w" x="235" y="863.500" textLength="38" lengthAdjust="spacingAndGlyphs">Output</text>
<text class="w" x="285" y="863.500" textLength="46" lengthAdjust="spacingAndGlyphs">Error List</text>
<text class="w" x="343" y="863.500" textLength="104" lengthAdjust="spacingAndGlyphs">Immediate Window</text>
<text class="w" x="459" y="863.500" textLength="72" lengthAdjust="spacingAndGlyphs">Find Results 1</text>
<text class="w" x="543" y="863.500" textLength="106" lengthAdjust="spacingAndGlyphs">Find Symbol Results</text>
<text class="w" x="661" y="863.500" textLength="93" lengthAdjust="spacingAndGlyphs">Pending Changes</text>
<g fill="#7e7046"><rect x="47" y="870" width="47" height="6"/><rect x="106" y="870" width="117" height="6"/><rect x="235" y="870" width="38" height="6"/><rect x="285" y="870" width="46" height="6"/><rect x="343" y="870" width="104" height="6"/><rect x="459" y="870" width="72" height="6"/><rect x="543" y="870" width="106" height="6"/><rect x="661" y="870" width="93" height="6"/><rect x="766" y="870" width="16" height="6"/></g>
<text class="w" x="45" y="892.500" textLength="32" lengthAdjust="spacingAndGlyphs">Ready</text>

<!-- Dialog -->
<rect x="1050.500" y="492.500" width="451" height="154" rx="5" fill="url(#aero)" stroke="#3a3a3a"/>
<rect x="1056" y="518" width="440" height="122" fill="#fff" stroke="#8a8a8a"/>
<rect x="1057" y="595" width="438" height="44" fill="#f0f0f0"/>
<text x="1056" y="508.500" style="fill:#1a1a1a" textLength="114" lengthAdjust="spacingAndGlyphs">Microsoft Visual Studio</text>
<path d="M1454 493H1496V504Q1496 508 1492 508H1458Q1454 508 1454 504Z" fill="url(#red)" stroke="#8a3a30"/>
<path d="M1471 496l9 8M1480 496l-9 8" stroke="#fff" stroke-width="2.200"/>
<path d="M1093 545L1107 570H1079Z" fill="url(#warn)" stroke="#9a9a88"/>
<rect x="1091.500" y="552" width="3" height="10" fill="#111"/><rect x="1091.500" y="564" width="3" height="3" fill="#111"/>
<text x="1116" y="553" style="font-size:11.500px" textLength="341" lengthAdjust="spacingAndGlyphs">You are trying to commit conflicted items. Please review the conflicted</text>
<text x="1116" y="567" style="font-size:11.500px" textLength="341" lengthAdjust="spacingAndGlyphs">files and resolve them, or remove the check when retrying the commit.</text>
<rect x="1409.500" y="607.500" width="76" height="21" rx="2" fill="url(#ok)" stroke="#3c7fb1" stroke-width="1.500"/>
<text x="1440" y="622" style="font-size:12px" textLength="16" lengthAdjust="spacingAndGlyphs">OK</text>
<path d="M1050 520H1056V640H1050Z" fill="#c2c2c2"/><path d="M1496 518H1501V640H1496Z" fill="#b0b0b0"/>

<!-- Annotations -->
<g filter="url(#sh)">
<circle cx="1110.500" cy="602" r="20.500" fill="#ee3f44"/>
<rect x="1174.500" y="585.500" width="200" height="117" rx="6" fill="#fff" stroke="#ee4449" stroke-width="3"/>
</g>
<text class="b" x="1102" y="611.500" style="font-size:26px;fill:#fff" textLength="17" lengthAdjust="spacingAndGlyphs">6</text>
<g text-anchor="middle">
<text x="1273" y="606" style="font-size:18.500px;fill:#111" textLength="134" lengthAdjust="spacingAndGlyphs">Cyclical Conflict</text>
<text x="1273" y="628" style="font-size:18.500px;fill:#111" textLength="98" lengthAdjust="spacingAndGlyphs">Messages?</text>
<text x="1273" y="672" style="font-size:18.500px;fill:#111" textLength="114" lengthAdjust="spacingAndGlyphs">Error screens</text>
<text x="1272" y="694" style="font-size:18.500px;fill:#111" textLength="80" lengthAdjust="spacingAndGlyphs">repeated.</text>
</g>
<g filter="url(#sh)">
<path d="M950 687L982 697L974 703L1006 730L995 740L967 709L959 717Z" fill="#ee3f44"/>
<circle cx="1005.500" cy="733" r="20.500" fill="#ee3f44"/>
</g>
<text x="997" y="743" style="font-size:27px;fill:#fff" textLength="16" lengthAdjust="spacingAndGlyphs">7</text>
<g filter="url(#sh)">
<path d="M92 541L61 527V537H38V546H61V556Z" fill="#ee3f44"/>
<circle cx="21" cy="546" r="20.500" fill="#ee3f44"/>
</g>
<text x="13" y="556" style="font-size:27px;fill:#fff" textLength="16" lengthAdjust="spacingAndGlyphs">6</text>
</svg>
</body></html>
